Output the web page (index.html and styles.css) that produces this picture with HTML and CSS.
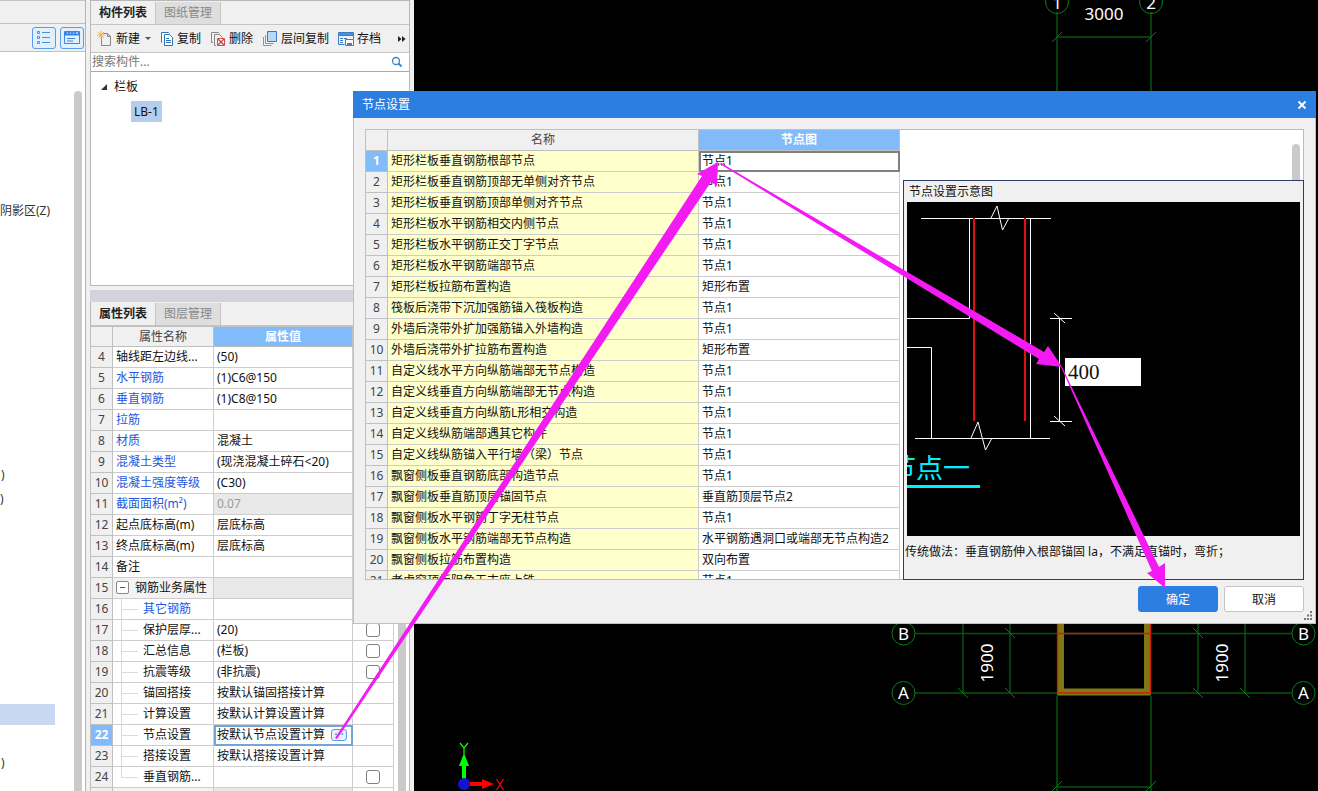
FILE: index.html
```html
<!DOCTYPE html>
<html lang="zh-CN">
<head>
<meta charset="utf-8">
<title>节点设置</title>
<link rel="stylesheet" href="styles.css">
</head>
<body>
<div class="app">
  <aside class="nav">
    <div class="nav-head"></div>
    <div class="nav-tools">
      <button class="view-btn" type="button" aria-label="列表视图">
        <svg width="16" height="16" viewBox="0 0 16 16" fill="none" stroke="#4a90e0"><path d="M1.500 1.500h2v2h-2zM1.500 6.500h2v2h-2zM1.500 11.500h2v2h-2zM6 2.500h8M6 7.500h8M6 12.500h8"/></svg>
      </button>
      <button class="view-btn" type="button" aria-label="详细视图">
        <svg width="16" height="16" viewBox="0 0 16 16" fill="none" stroke="#3a86e0"><path d="M.5 1.500h15v12h-15z"/><path d="M1 3.500h14" stroke-width="4"/><path d="M3 3h1M6 3h1M9 3h1M12 3h2" stroke="#fff" /><path d="M3 8.500h8M3 11h6"/></svg>
      </button>
    </div>
    <div class="nav-body">
      <ul class="nav-list">
        <li class="r7">阴影区(Z)</li>
        <li class="r18 deep">)</li>
        <li class="r19">)</li>
        <li class="r28 picked"></li>
        <li class="r30 deep">)</li>
      </ul>
      <div class="thumb"></div>
    </div>
  </aside>

  <section class="panels">
    <div class="panel">
      <div class="tabs">
        <button type="button" class="tab on">构件列表</button><button type="button" class="tab">图纸管理</button>
      </div>
      <div class="toolbar">
        <button type="button"><svg width="16" height="16" viewBox="0 0 16 16" fill="none"><path d="M4.500 6v8.500h9v-9l-3-3h-4" stroke="#888"/><path d="M10.500 2.500v3h3" stroke="#888"/><path d="M4 0v8M0 4h8M1 1l6 6M7 1l-6 6" stroke="#f2b050"/></svg>新建<i class="caret"></i></button>
        <button type="button"><svg width="14" height="16" viewBox="0 0 14 16" fill="#fff" stroke="#2f74b8"><path d="M1.500 11.500v-10h7l1 1"/><path d="M4.500 3.500h5l3 3v8h-8z"/><path d="M6 7.500h3M6 9.500h5M6 11.500h5"/></svg>复制</button>
        <button type="button"><svg width="16" height="16" viewBox="0 0 16 16" fill="none" stroke="#888"><path d="M3 11.500H1.500v-10h7l1 1"/><path d="M6 14.500H4.500v-11h5l3 3"/><path d="M7.500 7.500h7v7h-7z" fill="#fff" stroke="#c85050"/><path d="M8 8l6 6M14 8l-6 6" stroke="#c85050" stroke-width="1.500"/></svg>删除</button>
        <button type="button"><svg width="16" height="16" viewBox="0 0 16 16" fill="none"><path d="M1.500 6v8.500h8" stroke="#e08030"/><path d="M3.500 4v8.500h8" stroke="#e08030"/><path d="M5.500 .5h9v10h-9z" fill="#b8d8f8" stroke="#3a78c0"/></svg>层间复制</button>
        <button type="button"><svg width="16" height="16" viewBox="0 0 16 16" fill="none" stroke="#3a7cc4"><path d="M.5 1.500h15v3H.5z" fill="#4a90dc"/><path d="M.5 5v8.500h6M15.500 5v3M2 7.500h3M6 7.500h3M2 9.500h3M2 11.500h3"/><path d="M7.500 8.500h8v6h-8z" fill="#fff" stroke="#66788c"/><path d="M9 12h5v2H9z" fill="#66788c" stroke="none"/></svg>存档</button>
        <button type="button" class="more" aria-label="更多"><svg width="8" height="8" viewBox="0 0 8 8" fill="#222"><path d="M0 1l3.500 3L0 7zM4 1l3.500 3L4 7z"/></svg></button>
      </div>
      <div class="search">
        <input type="text" placeholder="搜索构件..." aria-label="搜索构件">
        <svg width="12" height="12" viewBox="0 0 12 12" fill="none" stroke="#3a86c8"><circle cx="5" cy="5" r="3.500" stroke-width="1.300"/><path d="M7.500 7.500l3 3" stroke-width="2"/></svg>
      </div>
      <div class="tree">
        <div class="tree-row"><svg width="8" height="8" viewBox="0 0 8 8"><path d="M7 1v6H1z" fill="#333"/></svg>栏板</div>
        <div class="tree-row child"><span class="picked-item">LB-1</span></div>
      </div>
    </div>
    <div class="splitter"></div>
    <div class="panel props">
      <div class="tabs">
        <button type="button" class="tab on">属性列表</button><button type="button" class="tab">图层管理</button>
      </div>
      <div class="props-body">
        <table class="grid props-grid">
          <colgroup><col class="c-num"><col class="c-key"><col class="c-val"><col class="c-chk"></colgroup>
          <thead><tr><th></th><th>属性名称</th><th class="hot">属性值</th><th></th></tr></thead>
          <tbody>
            <tr><th>4</th><td>轴线距左边线...</td><td>(50)</td><td></td></tr>
            <tr><th>5</th><td class="blue">水平钢筋</td><td>(1)C6@150</td><td></td></tr>
            <tr><th>6</th><td class="blue">垂直钢筋</td><td>(1)C8@150</td><td></td></tr>
            <tr><th>7</th><td class="blue">拉筋</td><td></td><td></td></tr>
            <tr><th>8</th><td class="blue">材质</td><td>混凝土</td><td></td></tr>
            <tr><th>9</th><td class="blue">混凝土类型</td><td>(现浇混凝土碎石&lt;20)</td><td></td></tr>
            <tr><th>10</th><td class="blue">混凝土强度等级</td><td>(C30)</td><td></td></tr>
            <tr><th>11</th><td class="blue">截面面积(m²)</td><td class="off">0.07</td><td></td></tr>
            <tr><th>12</th><td>起点底标高(m)</td><td>层底标高</td><td></td></tr>
            <tr><th>13</th><td>终点底标高(m)</td><td>层底标高</td><td></td></tr>
            <tr><th>14</th><td>备注</td><td></td><td></td></tr>
            <tr><th>15</th><td class="group"><button type="button" class="fold" aria-label="折叠"></button>钢筋业务属性</td><td class="off"></td><td></td></tr>
            <tr><th>16</th><td class="leaf blue">其它钢筋</td><td></td><td></td></tr>
            <tr><th>17</th><td class="leaf">保护层厚...</td><td>(20)</td><td class="chk"><input type="checkbox" aria-label="保护层厚"></td></tr>
            <tr><th>18</th><td class="leaf">汇总信息</td><td>(栏板)</td><td class="chk"><input type="checkbox" aria-label="汇总信息"></td></tr>
            <tr><th>19</th><td class="leaf">抗震等级</td><td>(非抗震)</td><td class="chk"><input type="checkbox" aria-label="抗震等级"></td></tr>
            <tr><th>20</th><td class="leaf">锚固搭接</td><td>按默认锚固搭接计算</td><td></td></tr>
            <tr><th>21</th><td class="leaf">计算设置</td><td>按默认计算设置计算</td><td></td></tr>
            <tr><th class="hot">22</th><td class="leaf">节点设置</td><td class="editing"><span>按默认节点设置计算</span><button type="button" class="dots" aria-label="编辑">···</button></td><td></td></tr>
            <tr><th>23</th><td class="leaf">搭接设置</td><td>按默认搭接设置计算</td><td></td></tr>
            <tr><th>24</th><td class="leaf last">垂直钢筋...</td><td></td><td class="chk"><input type="checkbox" aria-label="垂直钢筋"></td></tr>
            <tr><th></th><td class="group"><button type="button" class="fold" aria-label="折叠"></button></td><td class="off"></td><td></td></tr>
          </tbody>
        </table>
        <div class="thumb"></div>
      </div>
    </div>
  </section>

  <main class="model">
    <svg class="plan" width="904" height="791" viewBox="414 0 904 791" fill="none">
      <g class="axis-line">
        <path d="M1057 12V92M1151 12V92M1057 37H1151"/>
        <path d="M963 620V693M1010 620V693M1198 620V693M1245 620V693"/>
        <path d="M915 633.500H1292M915 693H1292"/>
        <path d="M1057 696V791M1151 696V791M1057 787H1151"/>
      </g>
      <g class="axis-tick">
        <path d="M1052 42l10-10M1146 42l10-10M1052 791l10-10M1146 791l10-10"/>
        <path d="M1005 628l10 10M1193 628l10 10M958 688l10 10M1005 688l10 10M1193 688l10 10M1240 688l10 10"/>
        <circle cx="1057" cy="2" r="11.500"/><circle cx="1151" cy="2" r="11.500"/>
        <circle cx="903.500" cy="633.500" r="11.500"/><circle cx="1303.500" cy="633.500" r="11.500"/>
        <circle cx="903.500" cy="693" r="11.500"/><circle cx="1303.500" cy="693" r="11.500"/>
      </g>
      <path d="M1060.500 620V692H1147.500V620" stroke="#807814" stroke-width="7"/>
      <path d="M1057.500 620V693H1150.500V620M1057 633.500H1151" stroke="#d01c10" stroke-width="1.300"/>
      <g class="axis-text">
        <text x="1057" y="9">1</text><text x="1151" y="9">2</text><text x="1104" y="20">3000</text>
        <text x="903.500" y="640">B</text><text x="1303.500" y="640">B</text>
        <text x="903.500" y="699">A</text><text x="1303.500" y="699">A</text>
        <text transform="translate(993 663) rotate(-90)">1900</text>
        <text transform="translate(1228 663) rotate(-90)">1900</text>
      </g>
      <path d="M464 780V765" stroke="#0f0" stroke-width="4"/><path d="M464 753l5 13h-10z" fill="#0f0"/>
      <path d="M468 784H484" stroke="#f00" stroke-width="4"/><path d="M494 784l-12-5v10z" fill="#f00"/>
      <circle cx="464" cy="784" r="6" fill="#1414d0"/>
      <path d="M460 743l4 5 4-5M464 748v6" stroke="#0f0" stroke-width="1.300"/>
      <path d="M496.500 779l7 11M503.500 779l-7 11" stroke="#f00" stroke-width="1.300"/>
    </svg>
  </main>
</div>

<div class="dialog" role="dialog" aria-label="节点设置">
  <div class="dialog-title"><span>节点设置</span>
    <button type="button" class="close" aria-label="关闭"><svg width="10" height="10" viewBox="0 0 10 10" stroke="#fff" stroke-width="1.800"><path d="M1.500 1.500l7 7M8.500 1.500l-7 7"/></svg></button>
  </div>
  <div class="dialog-body">
    <div class="node-list">
      <table class="grid node-grid">
        <colgroup><col class="c-num"><col class="c-name"><col class="c-node"></colgroup>
        <thead><tr><th></th><th>名称</th><th class="hot">节点图</th></tr></thead>
        <tbody>
          <tr><th class="hot">1</th><td>矩形栏板垂直钢筋根部节点</td><td class="current">节点1</td></tr>
          <tr><th>2</th><td>矩形栏板垂直钢筋顶部无单侧对齐节点</td><td>节点1</td></tr>
          <tr><th>3</th><td>矩形栏板垂直钢筋顶部单侧对齐节点</td><td>节点1</td></tr>
          <tr><th>4</th><td>矩形栏板水平钢筋相交内侧节点</td><td>节点1</td></tr>
          <tr><th>5</th><td>矩形栏板水平钢筋正交丁字节点</td><td>节点1</td></tr>
          <tr><th>6</th><td>矩形栏板水平钢筋端部节点</td><td>节点1</td></tr>
          <tr><th>7</th><td>矩形栏板拉筋布置构造</td><td>矩形布置</td></tr>
          <tr><th>8</th><td>筏板后浇带下沉加强筋锚入筏板构造</td><td>节点1</td></tr>
          <tr><th>9</th><td>外墙后浇带外扩加强筋锚入外墙构造</td><td>节点1</td></tr>
          <tr><th>10</th><td>外墙后浇带外扩拉筋布置构造</td><td>矩形布置</td></tr>
          <tr><th>11</th><td>自定义线水平方向纵筋端部无节点构造</td><td>节点1</td></tr>
          <tr><th>12</th><td>自定义线垂直方向纵筋端部无节点构造</td><td>节点1</td></tr>
          <tr><th>13</th><td>自定义线垂直方向纵筋L形相交构造</td><td>节点1</td></tr>
          <tr><th>14</th><td>自定义线纵筋端部遇其它构件</td><td>节点1</td></tr>
          <tr><th>15</th><td>自定义线纵筋锚入平行墙（梁）节点</td><td>节点1</td></tr>
          <tr><th>16</th><td>飘窗侧板垂直钢筋底部构造节点</td><td>节点1</td></tr>
          <tr><th>17</th><td>飘窗侧板垂直筋顶层锚固节点</td><td>垂直筋顶层节点2</td></tr>
          <tr><th>18</th><td>飘窗侧板水平钢筋丁字无柱节点</td><td>节点1</td></tr>
          <tr><th>19</th><td>飘窗侧板水平钢筋端部无节点构造</td><td>水平钢筋遇洞口或端部无节点构造2</td></tr>
          <tr><th>20</th><td>飘窗侧板拉筋布置构造</td><td>双向布置</td></tr>
          <tr><th>21</th><td>老虎窗顶板阴角无支座上铁</td><td>节点1</td></tr>
        </tbody>
      </table>
    </div>
    <div class="side">
      <div class="side-top"><div class="thumb"></div></div>
      <div class="preview">
        <div class="preview-title">节点设置示意图</div>
        <div class="preview-art">
          <svg width="393" height="334" viewBox="907 202 393 334" fill="none" stroke="#fff">
            <path d="M921 218.500H1051M969.500 218V318.500H907M907 347.500H931.500V438M1030.500 218V438M915 438.500H1050"/>
            <path d="M991 218l6-12 5.500 24 6.500-12M971 438l7-16 7.500 28 6.500-12"/>
            <path d="M974 218V421M1025 218V421" stroke="#e01010" stroke-width="2"/>
            <path d="M1059.500 318V421M1050 318.500h22M1050 421.500h22M1054 313l11 10M1054 416l11 10"/>
            <text class="cad-label" x="889" y="478" stroke="none">节点一</text>
            <path d="M907 486.500H980" stroke="#00f0ff" stroke-width="3"/>
          </svg>
          <input class="dim" type="text" value="400" aria-label="锚固长度">
        </div>
        <p class="note">传统做法：垂直钢筋伸入根部锚固 la，不满足直锚时，弯折；</p>
      </div>
    </div>
  </div>
  <div class="dialog-foot">
    <button type="button" class="btn primary">确定</button>
    <button type="button" class="btn">取消</button>
  </div>
  <svg class="grip" width="10" height="10" viewBox="0 0 10 10" fill="#777"><path d="M7 0h2v2H7zM4 3.500h2v2H4zM7 3.500h2v2H7zM1 7h2v2H1zM4 7h2v2H4zM7 7h2v2H7z"/></svg>
</div>

<svg class="arrows" width="1318" height="791" viewBox="0 0 1318 791" fill="#f31af3" aria-hidden="true">
  <path d="M335 738L702 176l-5-2 21-12-1 24-6-4L337 739z"/>
  <path d="M721 163L1044 352l4-6 14 21-26-3 3-5L720 164z"/>
  <path d="M1062 367L1159 567l6-4v25l-18-15 5-2L1061 367z"/>
</svg>
</body>
</html>
```
FILE: styles.css
```css
* { box-sizing: border-box; }
html, body { height: 100%; }
body {
  margin: 0;
  overflow: hidden;
  font: 12px/20px "Noto Sans", "Noto Sans CJK SC", sans-serif;
  color: #111;
  background: #f0f0f0;
}
button, input { font: inherit; color: inherit; }
button { padding: 0; border: 0; background: none; }
svg { display: block; flex: none; }

.app {
  display: grid;
  grid-template-columns: 86px 320px 1fr;
  column-gap: 4px;
  height: 100%;
}

/* left navigation */
.nav {
  display: flex;
  flex-direction: column;
  min-height: 0;
  border-right: 1px solid #b4b4b4;
}
.nav-head { flex: none; height: 24px; border-top: 1px solid #c4c4c4; border-bottom: 1px solid #c0c0c0; }
.nav-tools {
  flex: none;
  display: flex;
  justify-content: flex-end;
  gap: 4px;
  height: 28px;
  padding: 3px 1px 0 0;
  border-bottom: 1px solid #c0c0c0;
}
.view-btn {
  display: grid;
  place-items: center;
  width: 24px;
  height: 22px;
  border: 1px solid #5a9be8;
  border-radius: 3px;
  background: #e2effc;
}
.nav-body {
  flex: 1;
  min-height: 0;
  display: flex;
  justify-content: space-between;
  padding-right: 3px;
  background: #fff;
}
.nav-list {
  display: grid;
  grid-auto-rows: 24px;
  width: 55px;
  margin: 0;
  padding: 3px 0 0;
  list-style: none;
  line-height: 24px;
  color: #333;
}
.r7 { grid-row: 7; }
.r18 { grid-row: 18; }
.r19 { grid-row: 19; }
.r28 { grid-row: 28; }
.r30 { grid-row: 30; }
.deep { padding-left: 1px; }
.picked { margin: 1px 0 2px; background: #c8d8f0; }
.thumb { flex: none; width: 8px; background: #cacaca; border-radius: 4px 4px 0 0; }
.nav-body .thumb { margin-top: 39px; }

/* component list and properties */
.panels { display: flex; flex-direction: column; min-height: 0; }
.panel { border: 1px solid #b8b8b8; }
.tabs { display: flex; height: 24px; padding-top: 1px; border-bottom: 1px solid #c4c4c4; }
.tab {
  width: 65px;
  background: #dedede;
  color: #888;
  border-right: 1px solid #c4c4c4;
}
.tab.on { background: #f0f0f0; color: #222; font-weight: bold; }
.toolbar {
  display: flex;
  align-items: center;
  gap: 9px;
  height: 28px;
  padding: 0 3px 0 6px;
  border-bottom: 1px solid #c4c4c4;
}
.toolbar button { display: flex; align-items: center; gap: 3px; white-space: nowrap; }
.toolbar .more { margin-left: auto; }
.caret { margin-left: 2px; border: 3px solid transparent; border-top-color: #555; border-bottom: 0; }
.search {
  display: flex;
  align-items: center;
  height: 19px;
  padding-right: 6px;
  border-bottom: 1px solid #a8a8a8;
  background: #fff;
}
.search input { flex: 1; min-width: 0; height: 18px; padding: 0 1px; border: 0; outline: 0; background: none; }
.search input::placeholder { color: #777; opacity: 1; }
.tree { height: 213px; padding: 3px 0 0 9px; background: #fff; }
.tree-row { display: flex; align-items: center; gap: 6px; height: 24px; }
.tree-row.child { padding-left: 31px; }
.picked-item { padding: 0 3px; line-height: 21px; background: #b4cdec; }
.splitter { flex: none; height: 12px; margin-top: 4px; background: #d3d4db; }

.props { flex: 1; min-height: 0; display: flex; flex-direction: column; border-width: 0 1px; }
.props .tabs { flex: none; }
.props-body {
  flex: 1;
  min-height: 0;
  display: flex;
  justify-content: space-between;
  overflow: hidden;
  margin-left: -1px;
  padding-right: 3px;
  background: #fff;
}

.grid { border-collapse: collapse; table-layout: fixed; }
.grid tr { height: 21px; }
.grid th, .grid td {
  height: 21px;
  padding: 0 3px;
  border: 1px solid #cdcdcd;
  line-height: 20px;
  text-align: left;
  white-space: nowrap;
  overflow: hidden;
}
.grid th {
  padding: 0;
  background: #f0f0f0;
  border-color: #c0c0c0;
  color: #444;
  font-weight: normal;
  text-align: center;
}
.grid th.hot { background: #82bbfa; color: #fff; font-weight: bold; }
.grid .off { background: #e9e9e9; color: #999; }
.grid .blue { color: #2458e0; }
.c-num { width: 22px; }
.c-key { width: 101px; }
.c-val { width: 139px; }
.c-chk { width: 41px; }
.props-grid { width: 303px; align-self: flex-start; }
.props-grid thead tr, .props-grid thead th { height: 20px; line-height: 19px; }

.grid .group { background: #f3f3f3; }
.fold {
  width: 13px;
  height: 13px;
  margin: 0 6px 2px 0;
  border: 1px solid #888;
  border-radius: 2px;
  background: linear-gradient(#555, #555) center / 5px 1px no-repeat #fff;
  vertical-align: middle;
}
.grid .leaf {
  padding-left: 30px;
  background:
    linear-gradient(#dcdcdc, #dcdcdc) 8px 0 / 1px 100% no-repeat,
    linear-gradient(#dcdcdc, #dcdcdc) 8px 50% / 17px 1px no-repeat;
}
.grid .leaf.last { background-size: 1px 50%, 17px 1px; }
.grid .chk { text-align: center; }
.chk input {
  appearance: none;
  display: block;
  width: 14px;
  height: 14px;
  margin: 0 auto;
  border: 1px solid #808080;
  border-radius: 3px;
  background: #fff;
}
.grid .editing { outline: 2px solid #74a4d8; outline-offset: -2px; }
.editing span { margin-right: 6px; }
.dots {
  width: 16px;
  height: 12px;
  margin-bottom: 2px;
  border: 1px solid #5a9be8;
  border-radius: 3px;
  background: #e8f2fd;
  color: #2f80e0;
  line-height: 9px;
  vertical-align: middle;
}

/* drawing area */
.model { min-width: 0; overflow: hidden; background: #000; }
.axis-line { stroke: #06530f; stroke-width: 1.5; }
.axis-tick { stroke: #0c7a18; stroke-width: 1; }
.axis-text { fill: #fff; font-size: 17px; text-anchor: middle; }

/* dialog window over the drawing */
.dialog {
  position: absolute;
  top: 91px;
  left: 353px;
  right: 2px;
  border: 1px solid #bcc0c8;
  border-top: 0;
  background: #f0f0f0;
}
.dialog-title {
  display: flex;
  align-items: center;
  justify-content: space-between;
  height: 27px;
  margin: 0 -1px;
  padding: 0 9px;
  background: #2c7fe0;
  color: #fff;
}
.close { display: grid; place-items: center; }
.dialog-body {
  display: flex;
  height: 451px;
  margin: 11px 11px 0;
  border: 1px solid #bcbcbc;
  background: #fff;
}
.node-list { flex: none; overflow: hidden; margin: -1px 0 0 -1px; }
.node-grid { width: 534px; }
.c-name { width: 311px; }
.c-node { width: 201px; }
.node-grid td:nth-child(2) { background: #ffffcb; }
.grid .current { outline: 2px solid #808080; outline-offset: -2px; }
.side { flex: 1; min-width: 0; display: flex; flex-direction: column; padding-left: 3px; margin: 0 -1px -1px 0; }
.side-top { flex: none; display: flex; justify-content: flex-end; height: 50px; padding: 14px 4px 0 0; }
.preview {
  flex: 1;
  min-height: 0;
  padding: 0 3px;
  border: 1px solid #2c3e66;
  background: #f0f0f0;
}
.preview-title { height: 21px; padding-left: 2px; line-height: 22px; }
.preview-art { position: relative; overflow: hidden; background: #000; }
.cad-label { fill: #00f0ff; font-size: 27px; font-weight: 400; }
.dim {
  position: absolute;
  left: 158px;
  top: 156px;
  width: 76px;
  height: 28px;
  padding: 0 3px;
  border: 0;
  background: #fff;
  font: 21px/28px "Liberation Serif", serif;
}
.note { margin: 6px -2px 0; line-height: 20px; white-space: nowrap; }
.dialog-foot { display: flex; justify-content: flex-end; gap: 6px; padding: 6px 11px 11px; }
.btn {
  width: 80px;
  height: 26px;
  border: 1px solid #c4c4c4;
  border-radius: 3px;
  background: #fff;
  line-height: 26px;
}
.btn.primary { border-color: #2c7fe0; background: #2c7fe0; color: #fff; }
.grip { position: absolute; right: 2px; bottom: 2px; }

.arrows { position: absolute; top: 0; left: 0; pointer-events: none; }
```
